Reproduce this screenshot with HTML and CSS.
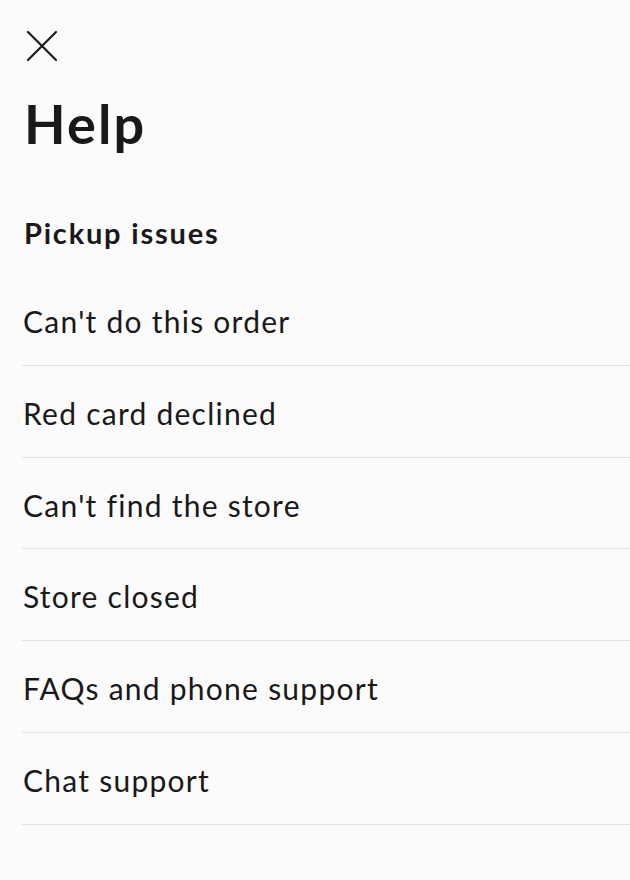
FILE: index.html
```html
<!DOCTYPE html>
<html lang="en">

<head>
    <meta charset="UTF-8">
    <meta name="viewport" content="width=device-width, initial-scale=1.0">
    <title>Help</title>
    <link rel="stylesheet" href="styles.css">
</head>

<body>

    <div class="page">
        <button class="close-btn" aria-label="Close">
            <svg width="32" height="32" viewBox="0 0 32 32">
                <path d="M2 2 L30 30 M30 2 L2 30" stroke="#1c1c1c" stroke-width="2.2" fill="none" stroke-linecap="round" />
            </svg>
        </button>

        <h1 class="title">Help</h1>

        <h2 class="section-title">Pickup issues</h2>

        <!-- list of help topics -->
        <ul class="help-list">
            <li class="help-item">Can't do this order</li>
            <li class="help-item">Red card declined</li>
            <li class="help-item">Can't find the store</li>
            <li class="help-item">Store closed</li>
            <li class="help-item">FAQs and phone support</li>
            <li class="help-item">Chat support</li>
        </ul>
    </div>

</body>

</html>
```

FILE: styles.css
```css
body {
    font-family: Lato, "Noto Sans", sans-serif;
    margin: 0;
    padding: 0;
    background-color: #fbfbfb;
    color: #191919;
}

.page {
    display: flex;
    flex-direction: column;
    padding-left: 22px;
}

.close-btn {
    background: none;
    border: none;
    padding: 0;
    margin: 30px 0 0 4px;
    width: 32px;
    height: 32px;
    cursor: pointer;
}

.close-btn svg {
    display: block;
}

.title {
    margin: 35px 0 0 2px;
    font-size: 54px;
    font-weight: 700;
    letter-spacing: 2.2px;
    line-height: 1;
}

.section-title {
    margin: 67px 0 0 2px;
    font-size: 29px;
    font-weight: 700;
    letter-spacing: 1.8px;
    line-height: 1;
}

.help-list {
    list-style: none;
    margin: 27px 0 0 0;
    padding: 0;
}

.help-item {
    box-sizing: border-box;
    height: 91.8px;
    padding-top: 32px;
    padding-left: 1px;
    font-size: 30px;
    letter-spacing: 1.25px;
    line-height: 1;
    border-bottom: 1px solid #e1e1e1;
}
```
